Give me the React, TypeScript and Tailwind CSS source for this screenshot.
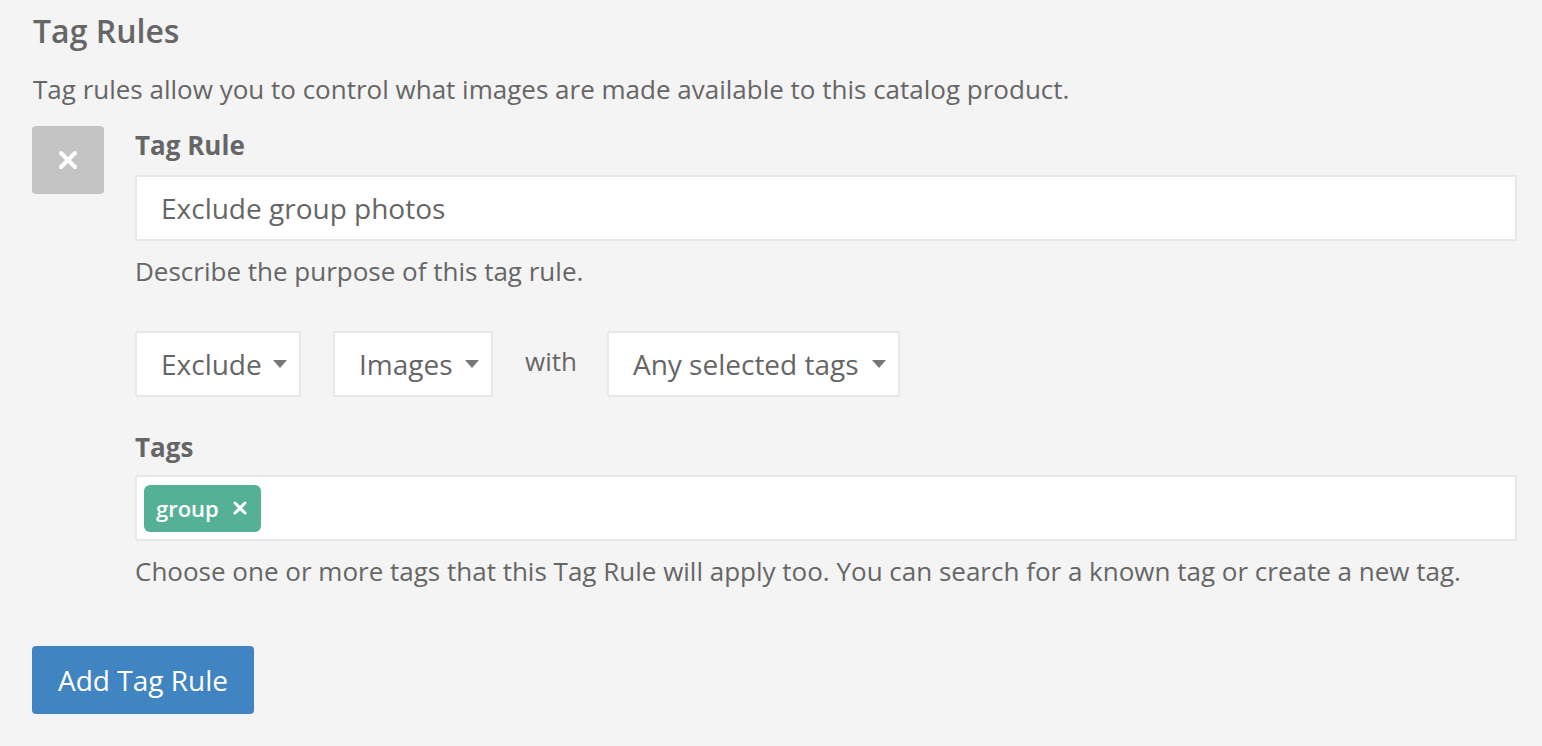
import React from 'react';

function Caret() {
  return (
    <svg width="14" height="8" viewBox="0 0 14 8" className="shrink-0">
      <path d="M0 0 L14 0 L7 8 Z" fill="#777" />
    </svg>
  );
}

function SelectBox({ label, width }: { label: string; width: string }) {
  return (
    <div className={`${width} h-[66px] bg-white border-2 border-[#e8e8e8] flex items-center justify-between pl-[24px] pr-[12px] text-[28px]`}>
      <span>{label}</span>
      <Caret />
    </div>
  );
}

export default function App() {
  return (
    <div className="min-h-screen bg-[#f4f4f4] text-[#666] font-['Open_Sans',sans-serif] pl-[33px] pr-[25px] pt-[11px] pb-[32px] text-[26px]">
      <h2 className="text-[32px] leading-[40px] font-semibold">Tag Rules</h2>
      <p className="mt-[23px] text-[26px] leading-[30px]">
        Tag rules allow you to control what images are made available to this catalog product.
      </p>

      <div className="mt-[22px] flex">
        <button className="w-[72px] h-[68px] -ml-px rounded bg-[#c4c4c4] flex items-center justify-center shrink-0">
          <svg width="20" height="20" viewBox="0 0 20 20">
            <path d="M3 3 L17 17 M17 3 L3 17" stroke="#fff" strokeWidth="4" strokeLinecap="round" />
          </svg>
        </button>

        <div className="flex-1 ml-[31px]">
          <label className="block mt-[4px] leading-[30px] font-bold">Tag Rule</label>
          <div className="mt-[15px] h-[66px] bg-white border-2 border-[#e8e8e8] flex items-center pl-[24px] text-[28px]">
            Exclude group photos
          </div>
          <p className="mt-[15px] leading-[30px]">Describe the purpose of this tag rule.</p>

          <div className="mt-[45px] flex items-center">
            <SelectBox label="Exclude" width="w-[166px]" />
            <SelectBox label="Images" width="w-[160px] ml-[32px]" />
            <span className="ml-[32px] mr-[30px] -mt-[5px]">with</span>
            <SelectBox label="Any selected tags" width="w-[293px]" />
          </div>

          <label className="block mt-[35px] leading-[30px] font-bold">Tags</label>
          <div className="mt-[13px] h-[66px] bg-white border-2 border-[#e8e8e8] flex items-center pl-[7px]">
            <span className="h-[47px] rounded-[6px] bg-[#55b195] text-white text-[22px] font-semibold flex items-center pl-[12px] pr-[14px]">
              group
              <svg width="14" height="14" viewBox="0 0 14 14" className="ml-[14px]">
                <path d="M2 2 L12 12 M12 2 L2 12" stroke="#fff" strokeWidth="3" strokeLinecap="round" />
              </svg>
            </span>
          </div>
          <p className="mt-[15px] leading-[30px]">
            Choose one or more tags that this Tag Rule will apply too. You can search for a known tag or create a new tag.
          </p>
        </div>
      </div>

      <button className="mt-[60px] -ml-px w-[222px] h-[68px] rounded bg-[#4184c2] text-white text-[28px] flex items-center justify-center">
        Add Tag Rule
      </button>
    </div>
  );
}
